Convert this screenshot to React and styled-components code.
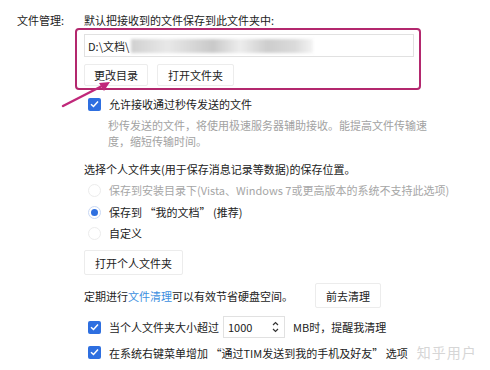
import React from "react";
import styled, { createGlobalStyle } from "styled-components";

const Global = createGlobalStyle`
  body {
    margin: 0;
    background: #fff;
    font-family: "Noto Sans CJK SC", "Microsoft YaHei", sans-serif;
    font-size: 11px;
    color: #222;
  }
`;

const Page = styled.div`
  position: relative;
  width: 490px;
  height: 370px;
  overflow: hidden;
  display: grid;
  grid-template-columns: 84px 1fr;
  padding-top: 12px;
  box-sizing: border-box;
`;

const Label = styled.div`
  padding-left: 17px;
  line-height: 16px;
`;

const Column = styled.div`
  display: flex;
  flex-direction: column;
`;

const Line = styled.div`
  line-height: 16px;
  margin-top: ${(p) => p.$top || 0}px;
  color: ${(p) => p.$muted ? "#a2a2a2" : "#222"};
  padding-left: ${(p) => p.$indent || 0}px;
  white-space: nowrap;
`;

const Highlight = styled.div`
  margin: 0 0 0 -9px;
  width: 335px;
  height: 54px;
  border: 2px solid #b3286e;
  border-radius: 4px;
  padding: 4px 0 0 7px;
  display: flex;
  flex-direction: column;
  gap: 7px;
`;

const PathInput = styled.div`
  width: 325px;
  height: 21px;
  border: 1px solid #e1e1e1;
  display: flex;
  align-items: center;
  padding-left: 3px;
  gap: 2px;
`;

const Blur = styled.div`
  width: 182px;
  height: 14px;
  background: linear-gradient(90deg, #d0d0d0 0%, #e8e8e8 20%, #c9c9c9 45%, #ededed 60%, #cdcdcd 75%, #dadada 90%, #f4f4f4 100%);
  filter: blur(1.5px);
`;

const Buttons = styled.div`
  display: flex;
  gap: 9px;
`;

const Button = styled.div`
  height: ${(p) => p.$h || 22}px;
  padding: 0 ${(p) => p.$pad || 9}px;
  border: 1px solid #ececec;
  border-radius: 2px;
  display: flex;
  align-items: center;
  box-sizing: border-box;
  background: #fff;
  margin-left: ${(p) => p.$left || 0}px;
`;

const CheckRow = styled.div`
  display: flex;
  align-items: center;
  gap: 8px;
  padding-left: 4px;
  height: 16px;
  white-space: nowrap;
  margin-top: ${(p) => p.$top || 0}px;
`;

const Box = styled.span`
  width: 13px;
  height: 13px;
  border-radius: 2px;
  background: #2e6fe0;
  display: flex;
  align-items: center;
  justify-content: center;
  flex: none;
`;

const Radio = styled.span`
  width: 11px;
  height: 11px;
  border-radius: 50%;
  border: 1px solid ${(p) => p.$on ? "#c9d8f4" : "#ececec"};
  display: flex;
  align-items: center;
  justify-content: center;
  flex: none;
  &::after {
    content: "";
    width: 7px;
    height: 7px;
    border-radius: 50%;
    background: ${(p) => p.$on ? "#2e6fe0" : "transparent"};
  }
`;

const RadioText = styled.span`
  color: ${(p) => p.$disabled ? "#a6a6a6" : "#222"};
`;

const Row = styled.div`
  display: flex;
  align-items: center;
  white-space: nowrap;
  margin-top: ${(p) => p.$top || 0}px;
`;

const Link = styled.span`
  color: #3d8fe0;
`;

const Spin = styled.div`
  width: 62px;
  height: 22px;
  box-sizing: border-box;
  border: 1px solid #e1e1e1;
  display: flex;
  align-items: center;
  justify-content: space-between;
  padding: 0 5px 0 4px;
  margin: 0 8px 0 4px;
`;

const Watermark = styled.span`
  margin-left: 9px;
  color: #d6d6d6;
  font-size: 14px;
  letter-spacing: 1px;
`;

const Arrow = styled.svg`
  position: absolute;
  left: 60px;
  top: 78px;
`;

const Tick = () => (
  <svg width="9" height="8" viewBox="0 0 9 8">
    <path d="M1 4.2 L3.5 6.5 L8 1.5" fill="none" stroke="#fff" strokeWidth="1.5" />
  </svg>
);

export default function App() {
  return (
    <Page>
      <Global />
      <Label>文件管理:</Label>
      <Column>
        <Line>默认把接收到的文件保存到此文件夹中:</Line>
        <Highlight>
          <PathInput>
            <span>D:\文档\</span>
            <Blur />
          </PathInput>
          <Buttons>
            <Button>更改目录</Button>
            <Button $pad={10}>打开文件夹</Button>
          </Buttons>
        </Highlight>
        <CheckRow $top={6}>
          <Box><Tick /></Box>
          <span>允许接收通过秒传发送的文件</span>
        </CheckRow>
        <Line $muted $indent={24} $top={5}>秒传发送的文件，将使用极速服务器辅助接收。能提高文件传输速</Line>
        <Line $muted $indent={24}>度，缩短传输时间。</Line>
        <Line $top={12}>选择个人文件夹(用于保存消息记录等数据)的保存位置。</Line>
        <CheckRow $top={5}>
          <Radio />
          <RadioText $disabled>保存到安装目录下(Vista、Windows 7或更高版本的系统不支持此选项)</RadioText>
        </CheckRow>
        <CheckRow $top={6}>
          <Radio $on />
          <RadioText>保存到 “我的文档” (推荐)</RadioText>
        </CheckRow>
        <CheckRow $top={5}>
          <Radio />
          <RadioText>自定义</RadioText>
        </CheckRow>
        <Row $top={9}>
          <Button $pad={10} $h={25}>打开个人文件夹</Button>
        </Row>
        <Row $top={8}>
          <span>定期进行<Link>文件清理</Link>可以有效节省硬盘空间。</span>
          <Button $pad={10} $left={22} $h={25}>前去清理</Button>
        </Row>
        <Row $top={8} style={{ paddingLeft: 4 }}>
          <Box><Tick /></Box>
          <span style={{ marginLeft: 8 }}>当个人文件夹大小超过</span>
          <Spin>
            <span>1000</span>
            <svg width="7" height="12" viewBox="0 0 7 12">
              <path d="M1 4 L3.5 1.5 L6 4 M1 8 L3.5 10.5 L6 8" fill="none" stroke="#333" strokeWidth="1.2" />
            </svg>
          </Spin>
          <span>MB时，提醒我清理</span>
        </Row>
        <CheckRow $top={6}>
          <Box><Tick /></Box>
          <span>在系统右键菜单增加 “通过TIM发送到我的手机及好友” 选项<Watermark>知乎用户</Watermark></span>
        </CheckRow>
      </Column>
      <Arrow width="60" height="34" viewBox="0 0 60 34">
        <path d="M3 28 L44 7" stroke="#c0287a" strokeWidth="2.5" strokeLinecap="round" />
        <path d="M50 4 L39 5 L44 13 Z" fill="#c0287a" />
      </Arrow>
    </Page>
  );
}
